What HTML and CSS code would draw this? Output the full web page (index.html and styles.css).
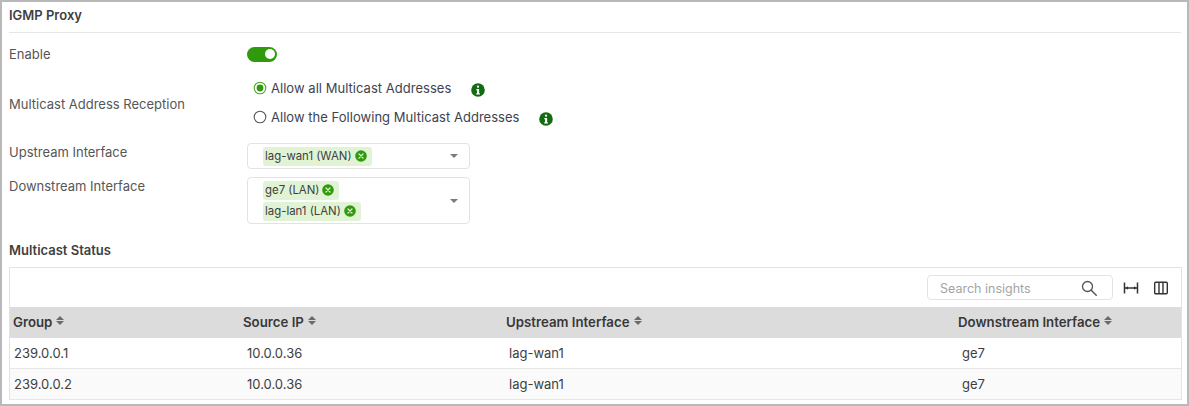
FILE: index.html
```html
<!DOCTYPE html>
<html lang="en">
<head>
<meta charset="utf-8">
<title>IGMP Proxy</title>
<link rel="stylesheet" href="styles.css">
</head>
<body>
<main class="panel">
  <h2 class="title">IGMP Proxy</h2>
  <div class="form">
    <div class="row row-enable">
      <div class="label">Enable</div>
      <div class="toggle"><span class="knob"></span></div>
    </div>
    <div class="row row-radio">
      <div class="label">Multicast Address Reception</div>
      <div class="radios">
        <div class="radio-line line-a">
          <svg class="radio" viewBox="0 0 14 14"><circle cx="7" cy="7" r="5.8" fill="#fff" stroke="#4aa52a" stroke-width="1.1"/><circle cx="7" cy="7" r="3.4" fill="#2f9a0c"/></svg>
          <span class="radio-text">Allow all Multicast Addresses</span>
          <svg class="info info-a" viewBox="0 0 14 14"><circle cx="7" cy="7" r="6.8" fill="#126b0e"/><rect x="5.9" y="2.5" width="2.2" height="2.2" rx="1" fill="#fff"/><path d="M5.3 6h2.8v4.2h.8v1.2H5.2v-1.2h.9V7.200h-.8z" fill="#fff"/></svg>
        </div>
        <div class="radio-line">
          <svg class="radio" viewBox="0 0 14 14"><circle cx="7" cy="7" r="5.8" fill="#fff" stroke="#555" stroke-width="1.1"/></svg>
          <span class="radio-text">Allow the Following Multicast Addresses</span>
          <svg class="info info-b" viewBox="0 0 14 14"><circle cx="7" cy="7" r="6.8" fill="#126b0e"/><rect x="5.9" y="2.5" width="2.2" height="2.2" rx="1" fill="#fff"/><path d="M5.3 6h2.8v4.2h.8v1.2H5.2v-1.2h.9V7.200h-.8z" fill="#fff"/></svg>
        </div>
      </div>
    </div>
    <div class="row row-up">
      <div class="label">Upstream Interface</div>
      <div class="select select-up">
        <div class="chips">
          <span class="chip">lag-wan1 (WAN)<svg class="chip-x" viewBox="0 0 12 12"><circle cx="6" cy="6" r="5.8" fill="#2f9a0c"/><path d="M4 4l4 4M8 4l-4 4" stroke="#e8f5de" stroke-width="1.2" stroke-linecap="round"/></svg></span>
        </div>
        <span class="caret"></span>
      </div>
    </div>
    <div class="row row-down">
      <div class="label">Downstream Interface</div>
      <div class="select select-down">
        <div class="chips">
          <span class="chip">ge7 (LAN)<svg class="chip-x" viewBox="0 0 12 12"><circle cx="6" cy="6" r="5.8" fill="#2f9a0c"/><path d="M4 4l4 4M8 4l-4 4" stroke="#e8f5de" stroke-width="1.2" stroke-linecap="round"/></svg></span>
          <span class="chip">lag-lan1 (LAN)<svg class="chip-x" viewBox="0 0 12 12"><circle cx="6" cy="6" r="5.8" fill="#2f9a0c"/><path d="M4 4l4 4M8 4l-4 4" stroke="#e8f5de" stroke-width="1.2" stroke-linecap="round"/></svg></span>
        </div>
        <span class="caret"></span>
      </div>
    </div>
  </div>
  <h3 class="subtitle">Multicast Status</h3>
  <section class="table-box">
    <div class="toolbar">
      <div class="search">
        <span class="search-text">Search insights</span>
        <svg class="search-icon" viewBox="0 0 16 16"><circle cx="6.500" cy="6.500" r="5" fill="none" stroke="#555" stroke-width="1.3"/><path d="M10.200 10.200l5 5" stroke="#555" stroke-width="1.500" stroke-linecap="round"/></svg>
      </div>
      <svg class="tool tool-width" viewBox="0 0 16 16"><path d="M1.500 2.500v11M14.500 2.500v11M1.500 8h13" fill="none" stroke="#333" stroke-width="1.500"/><path d="M2.500 8l2.500-1.800v3.600zM13.500 8l-2.500-1.800v3.600z" fill="#333"/></svg>
      <svg class="tool" viewBox="0 0 16 16"><rect x="1.700" y="2.200" width="12.600" height="11.600" rx="1" fill="none" stroke="#333" stroke-width="1.400"/><path d="M6 2.200v11.600M10 2.200v11.600" stroke="#333" stroke-width="1.400"/></svg>
    </div>
    <div class="thead trow">
      <div class="th">Group<span class="sort"><i class="up"></i><i class="down"></i></span></div>
      <div class="th">Source IP<span class="sort"><i class="up"></i><i class="down"></i></span></div>
      <div class="th">Upstream Interface<span class="sort"><i class="up"></i><i class="down"></i></span></div>
      <div class="th">Downstream Interface<span class="sort"><i class="up"></i><i class="down"></i></span></div>
    </div>
    <div class="trow body-row">
      <div class="td">239.0.0.1</div><div class="td">10.0.0.36</div><div class="td">lag-wan1</div><div class="td">ge7</div>
    </div>
    <div class="trow body-row alt">
      <div class="td">239.0.0.2</div><div class="td">10.0.0.36</div><div class="td">lag-wan1</div><div class="td">ge7</div>
    </div>
  </section>
</main>
</body>
</html>
```
FILE: styles.css
```css
* { box-sizing: border-box; }
html, body { margin: 0; padding: 0; background: #fff; }
body { width: 1189px; height: 406px; overflow: hidden; font-family: Inter, "Liberation Sans", sans-serif; font-size: 13px; color: #4f4f4f; }

.panel { height: 406px; border: 2px solid #b9b9b9; padding: 0 6px 0 7px; overflow: hidden; }

.title { margin: 0; height: 31px; padding-top: 6px; line-height: 14px; font-size: 13px; font-weight: 600; color: #3f3f3f; border-bottom: 1px solid #e6e6e6; }

.form { display: flex; flex-direction: column; }
.row { display: grid; grid-template-columns: 238px 1fr; }
.label { font-size: 13px; color: #565656; }

.row-enable { height: 42px; align-items: center; }
.row-enable .label { padding-bottom: 1px; }
.toggle { width: 30px; height: 15px; border-radius: 8px; background: #2f9a0c; display: flex; align-items: center; justify-content: flex-end; padding-right: 2px; }
.knob { width: 10px; height: 10px; border-radius: 50%; background: #fff; }

.row-radio { height: 58px; align-items: center; }
.row-radio .label { padding-bottom: 1px; }
.radios { display: flex; flex-direction: column; gap: 11px; margin-top: -3px; }
.radio-line { display: flex; align-items: center; height: 18px; color: #3e4350; }
.radio { width: 14px; height: 14px; margin-left: 6px; margin-right: 4px; flex: none; }
.radio-text { font-size: 13px; letter-spacing: 0.03px; }
.info { width: 14px; height: 14px; flex: none; position: relative; top: 2px; }
.info-a { margin-left: 20px; }
.info-b { margin-left: 20px; }

.row-up { margin-top: 10px; height: 34px; }
.row-down { height: 46px; }
.row-up .label { padding-top: 1px; }
.row-down .label { padding-top: 1px; }

.select { width: 223px; border: 1px solid #e3e3e3; border-radius: 4px; background: #fff; display: flex; align-items: center; justify-content: space-between; padding: 1px 11px 1px 15px; }
.select-up { height: 26px; }
.select-down { height: 47px; }
.chips { display: flex; flex-direction: column; align-items: flex-start; gap: 2px; }
.chip { display: inline-flex; align-items: center; height: 19px; padding: 0 5px 0 2px; border-radius: 3px; background: #e1f3d5; color: #3e3e3e; font-size: 11.400px; line-height: 19px; }
.chip-x { width: 12px; height: 12px; margin-left: 3px; }
.caret { width: 0; height: 0; border-left: 4.500px solid transparent; border-right: 4.500px solid transparent; border-top: 4.500px solid #7b7b7b; }

.subtitle { margin: 19px 0 0; height: 16px; line-height: 16px; font-size: 13px; font-weight: 600; color: #3f3f3f; }

.table-box { margin: 9px 0 0 0; width: 1173px; border: 1px solid #e3e3e3; border-bottom: none; }
.toolbar { height: 39px; display: flex; align-items: center; padding: 0 12px 0 0; justify-content: flex-end; }
.search { width: 186px; height: 25px; border: 1px solid #e3e3e3; border-radius: 4px; display: flex; align-items: center; justify-content: space-between; padding: 0 15px 0 12px; margin-right: 10px; }
.search-text { font-size: 12.500px; color: #a4a4a4; padding-top: 1px; }
.search-icon { width: 16px; height: 16px; }
.tool { width: 16px; height: 16px; margin-left: 14px; }
.tool-width { margin-left: 0; }

.trow { display: grid; grid-template-columns: 230px 263px 452px 1fr; }
.thead { height: 31px; background: #dcdcdc; align-items: center; }
.th { padding: 0 0 1px 3px; font-size: 13.250px; font-weight: 600; color: #383838; display: flex; align-items: center; }
.sort { display: inline-flex; flex-direction: column; gap: 1px; margin-left: 4px; position: relative; top: -2px; }
.sort i { display: block; width: 0; height: 0; border-left: 4px solid transparent; border-right: 4px solid transparent; }
.sort .up { border-bottom: 4px solid #6a6a6a; }
.sort .down { border-top: 4px solid #6a6a6a; }

.body-row { height: 31px; align-items: center; border-bottom: 1px solid #e6e6e6; }
.body-row.alt { background: #fafafa; }
.td { padding-left: 7px; font-size: 13px; color: #3e3e3e; }
.td:first-child { padding-left: 4px; }
.td:nth-child(3) { padding-left: 6px; }
```
